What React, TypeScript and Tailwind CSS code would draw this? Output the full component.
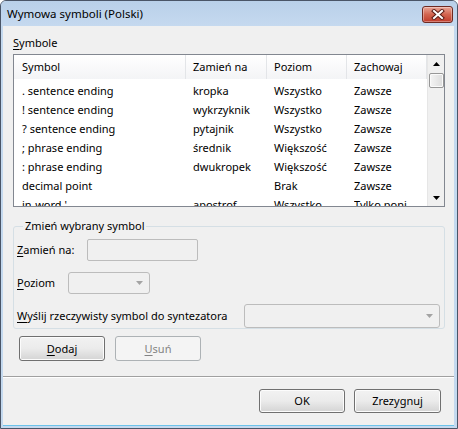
import React from "react";

const rows = [
  [". sentence ending", "kropka", "Wszystko", "Zawsze"],
  ["! sentence ending", "wykrzyknik", "Wszystko", "Zawsze"],
  ["? sentence ending", "pytajnik", "Wszystko", "Zawsze"],
  ["; phrase ending", "średnik", "Większość", "Zawsze"],
  [": phrase ending", "dwukropek", "Większość", "Zawsze"],
  ["decimal point", "", "Brak", "Zawsze"],
  ["in-word '", "apostrof", "Wszystko", "Tylko poniżej"],
];

const colWidths = ["w-[172px]", "w-[81px]", "w-[80px]", "w-[80px]"];

function CloseButton() {
  return (
    <div className="flex h-[17px] w-[31px] items-center justify-center rounded-[3px] border border-[#6e2a22] bg-gradient-to-b from-[#e8a597] via-[#d2644f] to-[#c0392a] shadow-[inset_0_0_0_1px_rgba(255,255,255,0.35)]">
      <svg width="14" height="11" viewBox="0 0 14 11">
        <path d="M3 2 L11 9 M11 2 L3 9" stroke="#5a1d16" strokeWidth="4" strokeLinecap="square" />
        <path d="M3 2 L11 9 M11 2 L3 9" stroke="#ffffff" strokeWidth="2" strokeLinecap="square" />
      </svg>
    </div>
  );
}

function Arrow({ up = false, color = "#000" }: { up?: boolean; color?: string }) {
  return (
    <svg width="7" height="4" viewBox="0 0 7 4">
      <path d={up ? "M3.5 0 L7 4 L0 4 Z" : "M0 0 L7 0 L3.5 4 Z"} fill={color} />
    </svg>
  );
}

function Button({ label, hot, disabled = false, w, h }: { label: string; hot?: string; disabled?: boolean; w: string; h: string }) {
  const rest = hot ? label.slice(1) : label;
  return (
    <div
      className={
        disabled
          ? `${w} ${h} flex items-center justify-center rounded-[3px] border border-[#adb2b5] bg-[#f4f4f4] text-[#838383]`
          : `${w} ${h} flex items-center justify-center rounded-[3px] border border-[#707070] bg-gradient-to-b from-[#f2f2f2] via-[#ebebeb] to-[#d4d4d4] text-black shadow-[inset_0_0_0_1px_#fcfcfc]`
      }
    >
      {hot ? (
        <span>
          <u className="underline-offset-2">{hot}</u>
          {rest}
        </span>
      ) : (
        <span>{label}</span>
      )}
    </div>
  );
}

export default function App() {
  return (
    <div
      className="h-[429px] w-[458px] bg-white text-[11px] leading-[16px] text-black"
      style={{ fontFamily: '"Noto Sans", "DejaVu Sans", sans-serif' }}
    >
      <div className="flex h-[429px] w-[458px] flex-col rounded-t-[6px] border border-[#4a5567] bg-[#c4d9ef]">
        {/* title bar */}
        <div className="flex h-[25px] shrink-0 items-center justify-between rounded-t-[5px] bg-gradient-to-b from-[#b9d0e9] to-[#c5d9ef] pl-[6px] pr-[4px]">
          <span className="pt-[1px] text-[11.5px]">Wymowa symboli (Polski)</span>
          <div className="mt-[1px]">
            <CloseButton />
          </div>
        </div>

        <div className="flex flex-1 flex-col pb-[1px] pl-[2px] pr-[3px]">
          <div className="flex h-[400px] flex-col border-b border-[#6cc3ea] bg-[#f0f0f0]">
            {/* Symbole */}
            <div className="ml-[10px] mt-[9px] shrink-0">
              <u className="underline-offset-2">S</u>ymbole
            </div>

            {/* list */}
            <div className="ml-[10px] mt-[3px] flex h-[153px] w-[432px] shrink-0 border border-[#828790] bg-white">
              <div className="flex flex-1 flex-col overflow-hidden">
                <div className="flex h-[24px] shrink-0 bg-gradient-to-b from-white to-[#f3f4f6]">
                  {["Symbol", "Zamień na", "Poziom", "Zachowaj"].map((h, i) => (
                    <div
                      key={h}
                      className={`${colWidths[i]} flex items-center border-r border-[#e3e5e8] ${i === 0 ? "pl-[8px]" : "pl-[7px]"}`}
                    >
                      {h}
                    </div>
                  ))}
                </div>
                <div className="shrink-0 pt-[2px]">
                  {rows.map((r) => (
                    <div key={r[0]} className="flex h-[19px] items-center">
                      {r.map((c, i) => (
                        <div
                          key={i}
                          className={`${colWidths[i]} overflow-hidden whitespace-nowrap ${i === 0 ? "pl-[8px]" : "pl-[7px]"}`}
                        >
                          {i === 3 ? <div className="w-[66px] truncate">{c}</div> : c}
                        </div>
                      ))}
                    </div>
                  ))}
                </div>
              </div>

              {/* scrollbar */}
              <div className="flex w-[17px] flex-col items-center border-l border-[#e6e6e6] bg-[#f0f0f0]">
                <div className="flex h-[17px] w-full items-center justify-center">
                  <Arrow up />
                </div>
                <div className="mt-[1px] h-[15px] w-[15px] rounded-[2px] border border-[#979797] bg-gradient-to-r from-[#f4f4f4] to-[#dcdcdc] shadow-[inset_0_0_0_1px_#fafafa]" />
                <div className="flex-1" />
                <div className="flex h-[17px] w-full items-center justify-center">
                  <Arrow />
                </div>
              </div>
            </div>

            {/* group */}
            <fieldset className="ml-[10px] mt-[11px] w-[432px] shrink-0 rounded-[3px] border border-[#d5dfe5] pl-[3px]">
              <legend className="ml-[6px] px-[2px]">Zmień wybrany symbol</legend>

              <div className="mt-[5px] flex h-[22px] items-center">
                <div className="w-[70px] whitespace-nowrap">
                  <u className="underline-offset-2">Z</u>amień na:
                </div>
                <div className="h-[22px] w-[111px] rounded-[2px] border border-[#bcbcbc] bg-[#f0f0f0]" />
              </div>

              <div className="mt-[11px] flex h-[22px] items-center">
                <div className="w-[51px] whitespace-nowrap">
                  <u className="underline-offset-2">P</u>oziom
                </div>
                <div className="flex h-[22px] w-[82px] items-center justify-end rounded-[3px] border border-[#bcbcbc] bg-[#f0f0f0] pr-[6px]">
                  <Arrow color="#a3a3a3" />
                </div>
              </div>

              <div className="mt-[10px] flex h-[24px] items-center">
                <div className="w-[227px] whitespace-nowrap">
                  <u className="underline-offset-2">W</u>yślij rzeczywisty symbol do syntezatora
                </div>
                <div className="flex h-[24px] w-[196px] items-center justify-end rounded-[3px] border border-[#bcbcbc] bg-[#f0f0f0] pr-[6px]">
                  <Arrow color="#a3a3a3" />
                </div>
              </div>
            </fieldset>

            {/* add / remove */}
            <div className="ml-[16px] mt-[7px] flex shrink-0 gap-[10px]">
              <Button label="Dodaj" hot="D" w="w-[86px]" h="h-[25px]" />
              <Button label="Usuń" hot="U" disabled w="w-[86px]" h="h-[25px]" />
            </div>

            <div className="mt-[15px] shrink-0 border-t border-b border-t-[#a0a0a0] border-b-white" />

            <div className="ml-[256px] mt-[11px] flex shrink-0 gap-[9px]">
              <Button label="OK" w="w-[86px]" h="h-[24px]" />
              <Button label="Zrezygnuj" w="w-[87px]" h="h-[24px]" />
            </div>
          </div>
        </div>
      </div>
    </div>
  );
}
